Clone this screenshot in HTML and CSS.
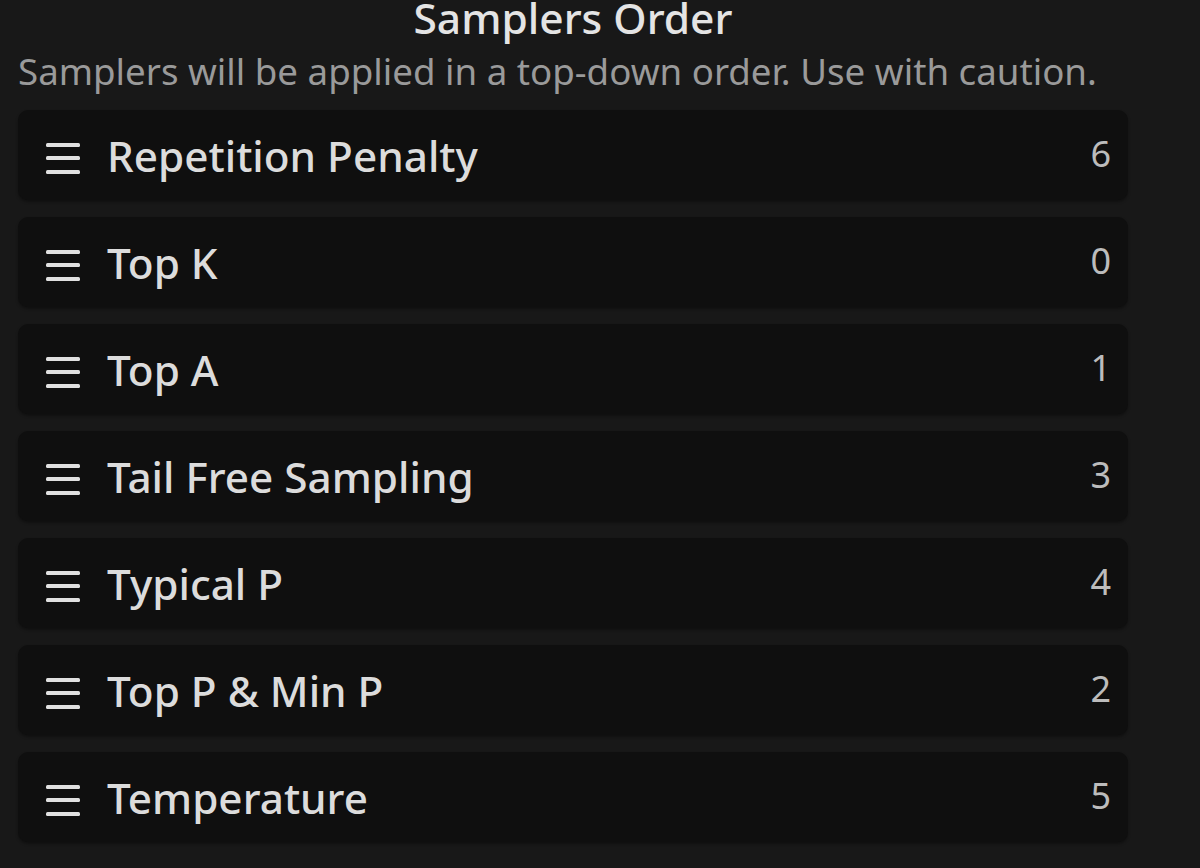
FILE: index.html
```html
<!DOCTYPE html>
<html lang="en">
<head>
<meta charset="utf-8">
<title>Samplers Order</title>
<link rel="stylesheet" href="styles.css">
</head>
<body>
<div class="panel">
  <div class="title">Samplers Order</div>
  <div class="subtitle">Samplers will be applied in a top-down order. Use with caution.</div>
  <div class="list">
    <div class="row">
      <svg class="handle" viewBox="0 0 34 40" width="34" height="40"><rect x="0" y="8" width="34" height="4" rx="1.5"/><rect x="0" y="21" width="34" height="4" rx="1.5"/><rect x="0" y="35" width="34" height="4" rx="1.5"/></svg>
      <span class="label">Repetition Penalty</span>
      <span class="num">6</span>
    </div>
    <div class="row">
      <svg class="handle" viewBox="0 0 34 40" width="34" height="40"><rect x="0" y="8" width="34" height="4" rx="1.5"/><rect x="0" y="21" width="34" height="4" rx="1.5"/><rect x="0" y="35" width="34" height="4" rx="1.5"/></svg>
      <span class="label">Top K</span>
      <span class="num">0</span>
    </div>
    <div class="row">
      <svg class="handle" viewBox="0 0 34 40" width="34" height="40"><rect x="0" y="8" width="34" height="4" rx="1.5"/><rect x="0" y="21" width="34" height="4" rx="1.5"/><rect x="0" y="35" width="34" height="4" rx="1.5"/></svg>
      <span class="label">Top A</span>
      <span class="num">1</span>
    </div>
    <div class="row">
      <svg class="handle" viewBox="0 0 34 40" width="34" height="40"><rect x="0" y="8" width="34" height="4" rx="1.5"/><rect x="0" y="21" width="34" height="4" rx="1.5"/><rect x="0" y="35" width="34" height="4" rx="1.5"/></svg>
      <span class="label">Tail Free Sampling</span>
      <span class="num">3</span>
    </div>
    <div class="row">
      <svg class="handle" viewBox="0 0 34 40" width="34" height="40"><rect x="0" y="8" width="34" height="4" rx="1.5"/><rect x="0" y="21" width="34" height="4" rx="1.5"/><rect x="0" y="35" width="34" height="4" rx="1.5"/></svg>
      <span class="label">Typical P</span>
      <span class="num">4</span>
    </div>
    <div class="row">
      <svg class="handle" viewBox="0 0 34 40" width="34" height="40"><rect x="0" y="8" width="34" height="4" rx="1.5"/><rect x="0" y="21" width="34" height="4" rx="1.5"/><rect x="0" y="35" width="34" height="4" rx="1.5"/></svg>
      <span class="label">Top P &amp; Min P</span>
      <span class="num">2</span>
    </div>
    <div class="row">
      <svg class="handle" viewBox="0 0 34 40" width="34" height="40"><rect x="0" y="8" width="34" height="4" rx="1.5"/><rect x="0" y="21" width="34" height="4" rx="1.5"/><rect x="0" y="35" width="34" height="4" rx="1.5"/></svg>
      <span class="label">Temperature</span>
      <span class="num">5</span>
    </div>
  </div>
</div>
</body>
</html>
```

FILE: styles.css
```css
html, body {
  margin: 0;
  padding: 0;
  background: #181818;
}

body {
  font-family: "Noto Sans", "Open Sans", sans-serif;
  width: 1200px;
  height: 868px;
  overflow: hidden;
}

.panel {
  width: 1110px;
  padding-left: 18px;
}

.title {
  text-align: center;
  font-size: 42.5px;
  font-weight: 500;
  line-height: 35px;
  color: #e4e4e4;
  white-space: nowrap;
}

.subtitle {
  margin-top: 13px;
  font-size: 36.7px;
  line-height: 46px;
  color: #9a9a9a;
  white-space: nowrap;
}

.list {
  margin-top: 16px;
  display: flex;
  flex-direction: column;
  gap: 17px;
}

.row {
  height: 90px;
  display: flex;
  align-items: center;
  padding: 0 17px 0 28px;
  background: #0f0f0f;
  border-radius: 10px;
  box-shadow: 0 2px 3px rgba(0, 0, 0, 0.35);
}

.handle {
  flex: none;
  fill: #e0e0e0;
  margin-right: 27px;
}

.label {
  flex: 1;
  font-size: 42.3px;
  font-weight: 500;
  color: #dcdcdc;
  white-space: nowrap;
}

.num {
  font-size: 36px;
  color: #bcbcbc;
  margin-top: -4px;
}
```
